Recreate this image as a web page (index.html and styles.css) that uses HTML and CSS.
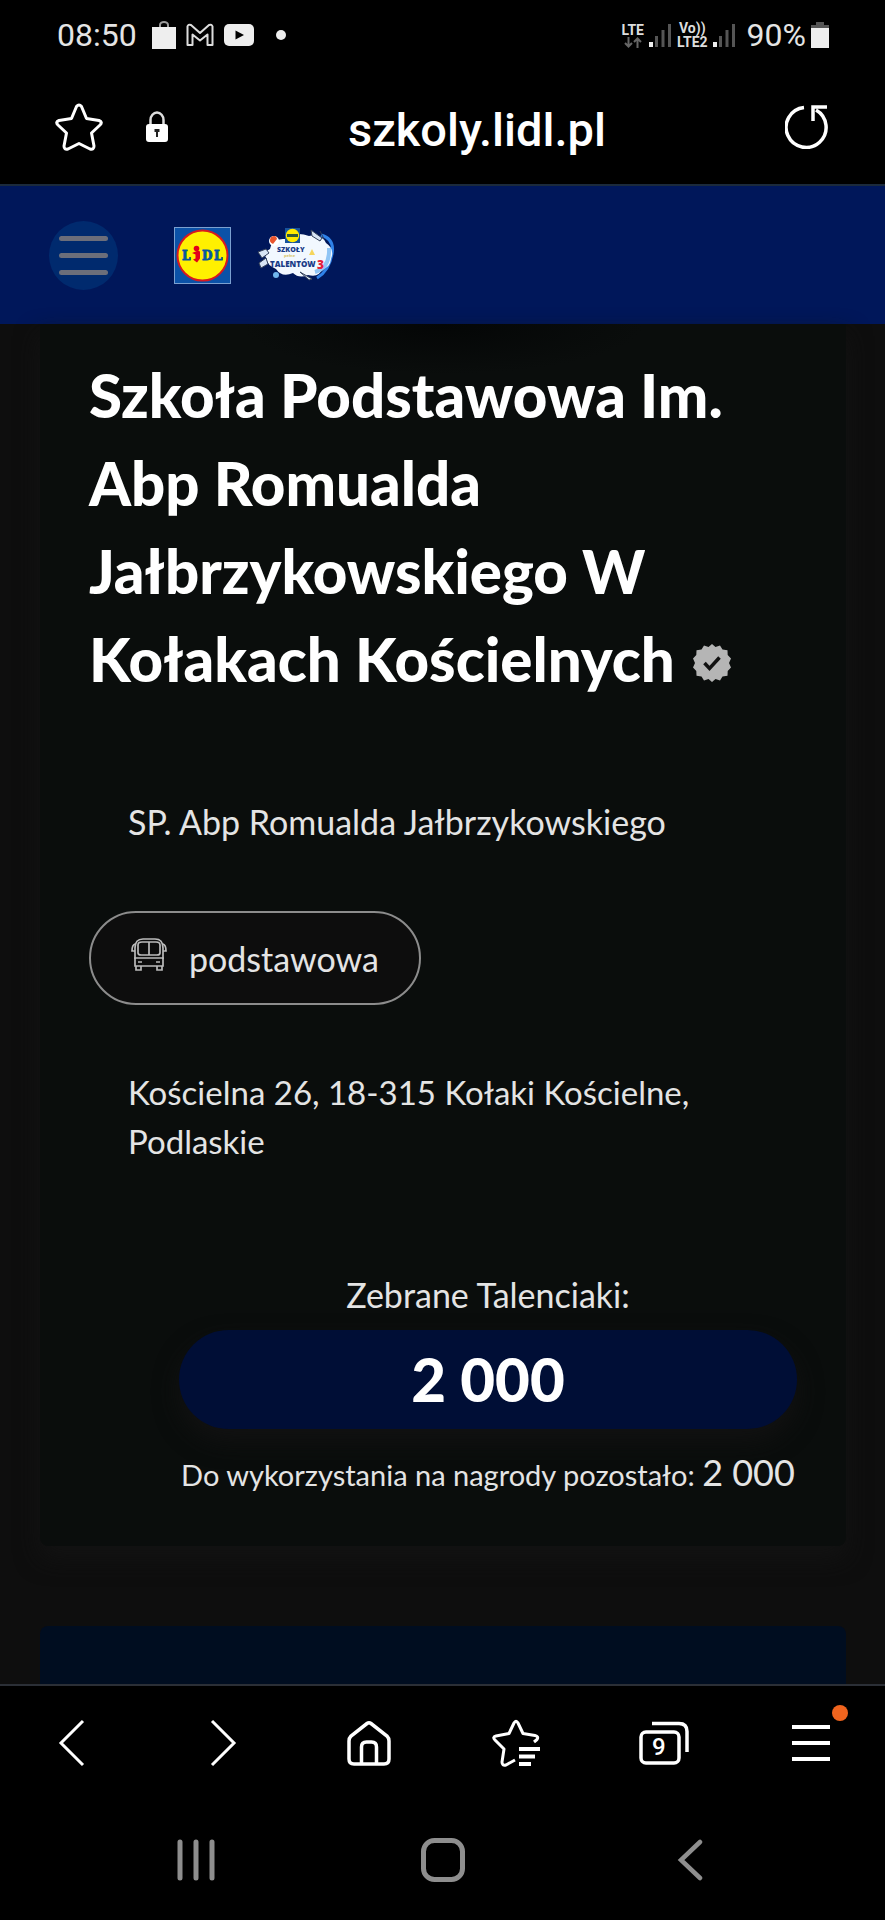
FILE: index.html
```html
<!DOCTYPE html>
<html lang="pl">
<head>
<meta charset="utf-8">
<meta name="viewport" content="width=device-width, initial-scale=1">
<title>Szkoły pełne talentów</title>
<link rel="stylesheet" href="styles.css">
</head>
<body>
<div class="status">
  <time class="status-text">08:50</time>
  <div class="notifications">
    <svg width="24" height="28" viewBox="0 0 24 28"><path d="M8 6V4a4 3 0 0 1 8 0v2" fill="none" stroke="#999" stroke-width="2"/><path d="M0 6h24v22H0z" fill="#eee"/></svg>
    <svg width="28" height="24" viewBox="0 0 28 24"><path d="M1.500 22V3.500Q2 1 5 2l9 8 9-8q3-1 3.500 1.500V22h-5V11.500L14 17.500l-7.500-6V22z" fill="none" stroke="#ddd" stroke-width="2" stroke-linejoin="round"/></svg>
    <svg width="30" height="22" viewBox="0 0 30 22"><rect width="30" height="22" rx="5" fill="#eee"/><path d="M11.500 6.500l8.500 4.500-8.500 4.500z" fill="#000"/></svg>
    <span class="more-dot"></span>
  </div>
  <div class="signals">
    <div class="network"><span>LTE</span>
      <svg width="18" height="11" viewBox="0 0 18 11"><path d="M4.500 0v9M1 6l3.500 3.500L8 6M13.500 11V2M10 5l3.500-3.500L17 5" fill="none" stroke="#666" stroke-width="2"/></svg>
    </div>
    <svg width="23" height="24" viewBox="0 0 23 24"><path d="M0 19h4v5H0z" fill="#eee"/><path d="M6 13h3v11H6zM12.500 7h3v17h-3zM19 1h3v23h-3z" fill="#555"/></svg>
    <div class="network"><span>Vo))</span><span>LTE2</span></div>
    <svg width="23" height="24" viewBox="0 0 23 24"><path d="M0 19h4v5H0z" fill="#eee"/><path d="M6 13h3v11H6zM12.500 7h3v17h-3zM19 1h3v23h-3z" fill="#555"/></svg>
  </div>
  <span class="status-text">90%</span>
  <svg width="18" height="26" viewBox="0 0 18 26"><path d="M5 0h8v3h5v4H0V3h5z" fill="#555"/><path d="M0 6h18v20H0z" fill="#eee"/></svg>
</div>

<div class="address-bar">
  <button class="icon-button" aria-label="Dodaj do zakładek">
    <svg width="48" height="48" viewBox="0 0 48 48"><path d="M21.500 3.500Q24 .5 26.500 3.500L31.500 15.500 44 17.500Q48 19 45 22L36.500 30 39 43Q39 47 35 46L24 40.500 13 46Q9 47 9 43L11.500 30 3 22Q0 19 4 17.500L16.500 15.500Z" fill="none" stroke="#fff" stroke-width="3" stroke-linejoin="round"/></svg>
  </button>
  <svg class="lock" width="24" height="32" viewBox="0 0 24 32"><path d="M5.500 15V9a6.500 7.500 0 0 1 13 0v6" fill="none" stroke="#ddd" stroke-width="2.500"/><rect x="1" y="13" width="22" height="18" rx="3" fill="#fff"/><path d="M9.500 18h5v3h-1.500v5h-2v-5H9.500z" fill="#222"/></svg>
  <div class="url">szkoly.lidl.pl</div>
  <button class="icon-button" aria-label="Odśwież">
    <svg width="44" height="44" viewBox="0 0 44 44"><path d="M19 2.500A20 20 0 1 0 31 5M42 2H28V16" fill="none" stroke="#fff" stroke-width="3.500"/></svg>
  </button>
</div>

<header class="site-header">
  <button class="burger" aria-label="Menu"><span></span><span></span><span></span></button>
  <a class="brand" href="#" aria-label="Lidl">
    <svg width="57" height="57" viewBox="0 0 57 57"><rect x=".5" y=".5" width="56" height="56" fill="#0b52a8" stroke="#7ba0d0"/><circle cx="28.500" cy="28.500" r="25" fill="#fff000" stroke="#d71920" stroke-width="2"/><g fill="#07559f" stroke="#07559f" stroke-width=".8" font-family="DejaVu Serif, serif" font-weight="700" font-size="12"><text x="8" y="33">L</text><text x="28" y="33">D</text><text x="40" y="33">L</text></g><circle cx="22.500" cy="21.500" r="2.800" fill="#e2001a"/><path d="M18 26l6-2.500 2 1v7l-3 4-4-3 2.500-1v-4z" fill="#e2001a"/></svg>
  </a>
  <a class="brand" href="#" aria-label="Szkoły pełne talentów 3">
    <svg width="80" height="56" viewBox="0 0 80 56"><path d="M64 8Q78 12 75 27 72 44 60 51" fill="none" stroke="#2f82e8" stroke-width="3"/><path d="M13 22q2-11 15-10 10-8 24-3 12-3 17 7 9 6 5 16-1 9-9 10-3 9-14 6-9 4-15-2-11 5-17-4-10-5-9-10-5-6 3-10z" fill="#f2f8ff"/><path d="M58 45q15-4 14-24" fill="none" stroke="#90c5f5" stroke-width="4"/><path d="M1 25l8-3 3 4-7 5zM2 36l7-5 2 6-7 4zM54 3l11 8-2 3-8-5zM63 4l4 8M43 45l12 7-3 1z" fill="#d8e5f5" stroke="#34415a" stroke-width="1"/><circle cx="17" cy="14" r="5" fill="#fff"/><path d="M14 10q5-3 6 2l-4 5q-5-2-2-7z" fill="#e9542d"/><circle cx="19" cy="48" r="3" fill="#70b6ed"/><rect x="28" y="1" width="15" height="15" fill="#17539b"/><circle cx="35.500" cy="8.500" r="6.700" fill="#ffe900"/><path d="M30 8.500h11" stroke="#31583c" stroke-width="3"/><g font-family="Open Sans, sans-serif" font-weight="800" fill="#183a86"><text x="20" y="25" font-size="7">SZKOŁY</text><text x="13" y="40" font-size="8">TALENTÓW</text></g><text x="27" y="30" font-family="Open Sans, sans-serif" font-size="4" font-weight="700" fill="#d8c56b">pełne</text><path d="M55 22l3 6h-6z" fill="#f5d55c"/><text x="60" y="42" font-family="Open Sans, sans-serif" font-size="12" font-weight="800" fill="#e3203c">3</text></svg>
  </a>
</header>

<main class="page">
  <article class="card">
    <h1 class="title">Szkoła Podstawowa Im. Abp Romualda Jałbrzykowskiego W Kołakach Kościelnych <svg class="verified" width="38" height="38" viewBox="0 0 38 38"><path d="M19 0l3.500 3 4.500-1.500 2.500 4 5 .8.2 4.700 3.300 3.500-2 4.500 2 4.500-3.300 3.500-.2 4.700-5 .8-2.500 4-4.500-1.500-3.500 3-3.500-3-4.500 1.500-2.500-4-5-.8-.2-4.700L0 23.500 2 19 0 14.500 3.300 11l.2-4.700 5-.8 2.500-4L15.500 3z" fill="#b5b5b5"/><path d="M11.500 19l5 5.500 10-11" fill="none" stroke="#111" stroke-width="3.500"/></svg></h1>
    <p class="text nickname">SP. Abp Romualda Jałbrzykowskiego</p>
    <div class="tag">
      <svg class="bus" width="36" height="33" viewBox="0 0 36 33"><g fill="none" stroke="#bbb" stroke-width="1.700"><path d="M4 21V10Q4 1 12 1h12q8 0 8 9v11"/><path d="M7 15V7q0-3 4-3h14q4 0 4 3v8q0 2-3 2H10q-3 0-3-2zM18 4v13M4 20h28v8H4zM5 28v4h5v-4M26 28v4h5v-4M7 24h4M25 24h4M4 6Q1 7 1 13h3M32 6q3 1 3 7h-3"/></g></svg>
      <span>podstawowa</span>
    </div>
    <p class="text address">Kościelna 26, 18-315 Kołaki Kościelne, Podlaskie</p>
    <section class="score">
      <p class="score-label">Zebrane Talenciaki:</p>
      <strong class="score-value">2 000</strong>
      <p class="score-left">Do wykorzystania na nagrody pozostało: <span>2 000</span></p>
    </section>
  </article>
  <section class="next-card"></section>
</main>

<nav class="toolbar" aria-label="Przeglądarka">
  <button class="icon-button" aria-label="Wstecz"><svg width="48" height="48" viewBox="0 0 48 48"><path d="M33 2L11 24l22 22" fill="none" stroke="#fff" stroke-width="3"/></svg></button>
  <button class="icon-button" aria-label="Dalej"><svg width="48" height="48" viewBox="0 0 48 48"><path d="M15 2l22 22-22 22" fill="none" stroke="#fff" stroke-width="3"/></svg></button>
  <button class="icon-button" aria-label="Strona startowa"><svg width="48" height="48" viewBox="0 0 48 48"><path d="M22 4.500q2-1.500 4 0L42 17q2 2 2 5v18q0 5-5 5H9q-5 0-5-5V22q0-3 2-5zM16.500 45V28q0-5 5-5h5q5 0 5 5v17" fill="none" stroke="#fff" stroke-width="3.500"/></svg></button>
  <button class="icon-button" aria-label="Zakładki"><svg width="48" height="48" viewBox="0 0 48 48"><path d="M42 23l3-2.500q2-3-2-4L31 14.500 26 4q-2-3.500-4 0L17 14.500 4 17q-4 1-1 4l9 9-2 13q0 4 4 3l9-5" fill="none" stroke="#fff" stroke-width="3" stroke-linejoin="round"/><path d="M27 30h21M27 37.500h16M27 45h12" stroke="#fff" stroke-width="4"/></svg></button>
  <button class="icon-button tabs" aria-label="Karty"><svg width="50" height="44" viewBox="0 0 50 44"><rect x="2" y="11" width="38" height="31" rx="5" fill="none" stroke="#fff" stroke-width="3.500"/><path d="M13 2.500h27q8 0 8 8V31" fill="none" stroke="#fff" stroke-width="3.500"/></svg><span class="tab-count">9</span></button>
  <button class="icon-button menu" aria-label="Menu przeglądarki"><svg width="40" height="40" viewBox="0 0 40 40"><path d="M1 4h38M1 20h38M1 36h38" stroke="#fff" stroke-width="4"/></svg><span class="alert-dot"></span></button>
</nav>
<nav class="system-nav" aria-label="System">
  <button class="icon-button" aria-label="Ostatnie"><svg width="40" height="42" viewBox="0 0 40 42"><path d="M4 3v36M20 3v36M36 3v36" stroke="#8e8e8e" stroke-width="5" stroke-linecap="round"/></svg></button>
  <button class="icon-button" aria-label="Ekran główny"><svg width="44" height="44" viewBox="0 0 44 44"><rect x="2.500" y="2.500" width="39" height="39" rx="11" fill="none" stroke="#8e8e8e" stroke-width="5"/></svg></button>
  <button class="icon-button" aria-label="Cofnij"><svg width="26" height="42" viewBox="0 0 26 42"><path d="M23 3L4 21l19 18" fill="none" stroke="#8e8e8e" stroke-width="4.500" stroke-linecap="round"/></svg></button>
</nav>
</body>
</html>
```
FILE: styles.css
```css
* { box-sizing: border-box; }

body {
  margin: 0;
  min-height: 100vh;
  display: flex;
  flex-direction: column;
  background: #000;
  color: #fff;
  font-family: Lato, "Noto Sans", sans-serif;
}

svg { display: block; flex: none; }

h1, p { margin: 0; }

button {
  margin: 0;
  padding: 0;
  border: 0;
  background: none;
  color: inherit;
}

.icon-button { display: grid; place-items: center; }

.status {
  height: 70px;
  padding: 0 56px 0 57px;
  display: flex;
  align-items: center;
  font-family: Roboto, sans-serif;
}

.status-text { font-size: 32px; color: #e4e4e4; }

.notifications {
  flex: 1;
  display: flex;
  align-items: center;
  gap: 10px;
  margin-left: 15px;
}

.more-dot {
  width: 10px;
  height: 10px;
  margin-left: 12px;
  border-radius: 50%;
  background: #eee;
}

.signals {
  display: flex;
  align-items: center;
  gap: 5px;
  margin-right: 11px;
}

.network {
  display: flex;
  flex-direction: column;
  align-items: center;
  font-size: 14px;
  font-weight: 700;
  line-height: 14px;
  color: #ddd;
}

.status-text + svg { margin-left: 5px; }

.address-bar {
  height: 114px;
  padding: 0 56px 0 55px;
  display: flex;
  align-items: center;
}

.lock { margin-left: 42px; }

.url {
  flex: 1;
  padding-top: 4px;
  text-align: center;
  font-family: Roboto, sans-serif;
  font-size: 47px;
  font-weight: 500;
}

.site-header {
  height: 140px;
  padding: 0 49px;
  border-top: 2px solid #1b2a3c;
  display: flex;
  align-items: center;
  background: #00175a;
}

.burger {
  width: 69px;
  height: 69px;
  border-radius: 50%;
  background: #002a6e;
  display: flex;
  flex-direction: column;
  align-items: center;
  justify-content: center;
  gap: 12px;
}

.burger span {
  width: 49px;
  height: 5px;
  border-radius: 3px;
  background: #6b6e7a;
}

.brand { margin-left: 56px; }
.brand + .brand { margin-left: 26px; }

.page {
  flex: 1;
  display: flex;
  flex-direction: column;
  gap: 80px;
  padding: 0 39px 0 40px;
  background: #0e0e0e;
}

.card {
  padding: 27px 49px 47px;
  border-radius: 0 0 8px 8px;
  background: radial-gradient(ellipse 200px 50px at 50% 0, #040606, #0a0d0c);
  box-shadow: 0 12px 24px #131313;
}

.title {
  font-size: 60px;
  line-height: 88px;
  font-weight: 900;
}

.verified { display: inline-block; margin-left: 4px; }

.text, .tag, .score-label {
  font-size: 34px;
  line-height: 49px;
  color: #e4e4e4;
}

.text { padding-left: 39px; }

.nickname { margin-top: 94px; }

.tag {
  width: fit-content;
  height: 94px;
  margin: 65px 0 63px;
  padding: 0 40px;
  border: 2px solid #8c8c8c;
  border-radius: 47px;
  background: #0d0d0d;
  display: flex;
  align-items: center;
  gap: 22px;
}

.bus { margin-bottom: 8px; }

.address { font-size: 33px; }

.score {
  margin: 104px 0 0 90px;
  text-align: center;
}

.score-value {
  display: block;
  margin: 11px 0 19px;
  border-radius: 50px;
  background: #000e36;
  box-shadow: 0 12px 24px #121212;
  font-size: 60px;
  line-height: 99px;
  font-weight: 900;
}

.score-left {
  font-size: 29px;
  line-height: 49px;
  color: #e4e4e4;
}

.score-left span { font-size: 36px; }

.next-card {
  flex: 1;
  border-radius: 8px 8px 0 0;
  background: #000d20;
}

.toolbar {
  height: 116px;
  border-top: 2px solid #2b2f36;
  display: grid;
  grid-template-columns: repeat(6, 1fr);
}

.tabs, .menu { position: relative; }

.tab-count {
  position: absolute;
  inset: 8px 10px 0 0;
  display: grid;
  place-items: center;
  font: 500 24px Roboto, sans-serif;
}

.alert-dot {
  position: absolute;
  top: 19px;
  right: 37px;
  width: 16px;
  height: 16px;
  border-radius: 50%;
  background: #f0641e;
}

.system-nav {
  height: 120px;
  padding: 0 72px;
  display: grid;
  grid-template-columns: repeat(3, 1fr);
}
```
